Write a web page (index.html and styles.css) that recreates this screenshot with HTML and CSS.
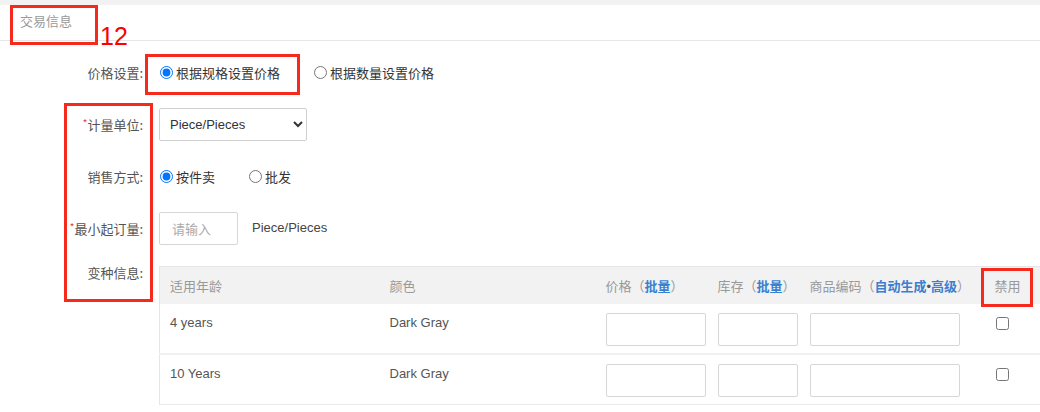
FILE: index.html
```html
<!DOCTYPE html>
<html>
  <head>
    <title>交易信息</title>
    <link rel="stylesheet" href="styles.css">
  </head>
  <body>
    <div class="topbar"></div>
    <div class="section-head">交易信息</div>

    <form class="trade-form" action="">
      <div class="row">
        <label class="label">价格设置:</label>
        <div class="field">
          <label class="opt"><input type="radio" name="mode" checked>根据规格设置价格</label>
          <label class="opt"><input type="radio" name="mode">根据数量设置价格</label>
        </div>
      </div>
      <div class="row">
        <label class="label"><span class="req">*</span>计量单位:</label>
        <div class="field">
          <select class="unit"><option>Piece/Pieces</option></select>
        </div>
      </div>
      <div class="row">
        <label class="label">销售方式:</label>
        <div class="field">
          <label class="opt"><input type="radio" name="sale" checked>按件卖</label>
          <label class="opt"><input type="radio" name="sale">批发</label>
        </div>
      </div>
      <div class="row">
        <label class="label"><span class="req">*</span>最小起订量:</label>
        <div class="field">
          <input class="moq" placeholder="请输入">
          <span class="unit-text">Piece/Pieces</span>
        </div>
      </div>
      <div class="row row-top">
        <label class="label">变种信息:</label>
        <div class="field">
          <table class="variants">
            <colgroup>
              <col style="width:220px"><col style="width:216px"><col style="width:112px">
              <col style="width:92px"><col style="width:185px"><col>
            </colgroup>
            <thead>
              <tr>
                <th>适用年龄</th>
                <th>颜色</th>
                <th>价格（<a>批量</a>）</th>
                <th>库存（<a>批量</a>）</th>
                <th>商品编码（<a>自动生成<span class="dot">•</span>高级</a>）</th>
                <th>禁用</th>
              </tr>
            </thead>
            <tbody>
              <tr>
                <td>4 years</td>
                <td>Dark Gray</td>
                <td><input class="cell price"></td>
                <td><input class="cell stock"></td>
                <td><input class="cell code"></td>
                <td><input type="checkbox"></td>
              </tr>
              <tr>
                <td>10 Years</td>
                <td>Dark Gray</td>
                <td><input class="cell price"></td>
                <td><input class="cell stock"></td>
                <td><input class="cell code"></td>
                <td><input type="checkbox"></td>
              </tr>
            </tbody>
          </table>
        </div>
      </div>
    </form>

    <!-- review marks -->
    <div class="mark mark-title"></div>
    <div class="mark-num">12</div>
    <div class="mark mark-price"></div>
    <div class="mark mark-labels"></div>
    <div class="mark mark-disable"></div>
  </body>
</html>
```

FILE: styles.css
```css
body { margin: 0; font-family: "Liberation Sans", "Noto Sans CJK SC", sans-serif; font-size: 13px; color: #333; background: #fff; position: relative; overflow: hidden; }

.topbar { height: 5px; background: #f2f2f2; }
.section-head { height: 35px; line-height: 32px; padding-left: 20px; color: #999; border-bottom: 1px solid #e6e6e6; font-family: "Noto Sans CJK SC", sans-serif; }

.trade-form { padding-top: 15px; }
.row { display: flex; align-items: center; min-height: 33px; margin-bottom: 19px; }
.row-top { align-items: flex-start; margin-top: 2px; }
.label { width: 143px; text-align: right; color: #555; font-family: "Noto Sans CJK SC", sans-serif; flex-shrink: 0; }
.row-top .label { line-height: 18px; }
.req { color: #e4393c; font-size: 10px; vertical-align: 3px; }
.field { margin-left: 16px; display: flex; align-items: center; flex: 1; }
.row-top .field { margin-top: 2px; }

.opt { display: inline-flex; align-items: center; margin-right: 33px; color: #333; font-family: "Noto Sans CJK SC", sans-serif; }
.opt input { margin: 0 3px 0 1px; width: 13px; height: 13px; }

.unit { width: 148px; height: 33px; border: 1px solid #d0d0d0; border-radius: 2px; padding: 0 6px; font-family: "Liberation Sans", sans-serif; font-size: 13px; color: #333; background: #fff; }
.moq { width: 79px; height: 33px; box-sizing: border-box; border: 1px solid #d6d6d6; border-radius: 2px; padding: 0 12px; font-family: "Noto Sans CJK SC", sans-serif; font-size: 13px; }
.moq::placeholder { color: #aaa; }
.unit-text { margin-left: 14px; margin-top: -2px; color: #444; }

.variants { width: 100%; table-layout: fixed; border-collapse: collapse; border-left: 1px solid #e6e6e6; border-top: 1px solid #e6e6e6; }
.variants th { background: #f2f2f2; height: 37px; padding: 0 0 0 10px; text-align: left; font-weight: normal; color: #999; font-family: "Noto Sans CJK SC", sans-serif; white-space: nowrap; }
.variants th a { color: #3b7fd0; font-weight: bold; }
.variants th .dot { font-family: "Liberation Sans", sans-serif; font-weight: normal; color: #555; }
.variants tbody tr { height: 50px; }
.variants td { padding: 9px 0 0 10px; vertical-align: top; color: #555; border-top: 2px solid #f0f0f0; line-height: 20px; }
.variants tbody tr:first-child td { border-top: 0; }
.variants tbody tr:last-child td { border-bottom: 1px solid #eaeaea; }
.cell { height: 33px; box-sizing: border-box; border: 1px solid #d6d6d6; border-radius: 2px; margin: 0; display: block; }
.price { width: 100px; }
.stock { width: 80px; }
.code { width: 150px; }
.variants input[type=checkbox] { margin: 4px 0 0 1px; width: 13px; height: 13px; }

.mark { position: absolute; border: 3px solid #f52a1c; box-sizing: border-box; }
.mark-title { left: 10px; top: 5px; width: 88px; height: 40px; }
.mark-num { position: absolute; left: 100px; top: 22px; color: #ff0000; font-size: 25px; line-height: 28px; }
.mark-price { left: 145px; top: 54px; width: 155px; height: 41px; }
.mark-labels { left: 64px; top: 103px; width: 89px; height: 199px; }
.mark-disable { left: 981px; top: 268px; width: 52px; height: 39px; }
```
